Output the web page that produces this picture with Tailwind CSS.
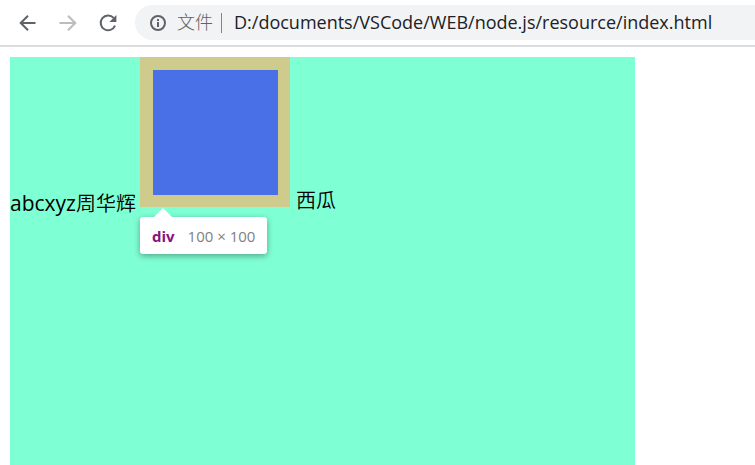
<!DOCTYPE html>
<html lang="zh-CN">
<head>
<meta charset="utf-8">
<meta name="viewport" content="width=device-width, initial-scale=1">
<title>index.html</title>
<script src="https://cdn.jsdelivr.net/npm/@tailwindcss/browser@4"></script>
</head>
<body class="flex h-screen flex-col overflow-hidden bg-white font-['Open_Sans','Noto_Sans_CJK_SC',sans-serif] text-black">
  <header class="flex shrink-0 items-center border-b-2 border-[#dadce0] pt-[5px] pb-[5px] pl-4">
    <nav class="flex items-center gap-4" aria-label="导航">
      <button type="button" aria-label="后退" class="size-6 text-[#5f6368]">
        <svg viewBox="0 0 24 24" class="size-6" fill="none" stroke="currentColor" stroke-width="2"><path d="M19.5 12H5M12 4.7 4.7 12l7.3 7.3"/></svg>
      </button>
      <button type="button" aria-label="前进" class="size-6 text-[#babcbe]">
        <svg viewBox="0 0 24 24" class="size-6" fill="none" stroke="currentColor" stroke-width="2"><path d="M3.5 12H19M12 4.7l7.3 7.3-7.3 7.3"/></svg>
      </button>
      <button type="button" aria-label="重新加载" class="size-6 text-[#5f6368]">
        <svg viewBox="0 0 24 24" class="size-6" fill="none" stroke="currentColor" stroke-width="2"><path d="M17.6 6.9A7.4 7.4 0 1 0 19 14.6"/><path d="M20.4 4v7h-7z" fill="currentColor" stroke="none"/></svg>
      </button>
    </nav>
    <div class="ml-[15px] flex h-[35px] min-w-0 flex-1 items-center rounded-l-full bg-[#f1f3f4] pl-[13px]">
      <svg viewBox="0 0 20 20" class="size-5 shrink-0 text-[#5f6368]" fill="none" stroke="currentColor" stroke-width="2" aria-hidden="true"><circle cx="10" cy="10" r="7"/><path d="M10 9v5M10 6v2"/></svg>
      <label for="address" class="ml-[9px] shrink-0 pb-[2px] text-lg font-light text-[#5f6368]">文件</label>
      <span class="ml-2 h-5 w-px shrink-0 bg-[#80868b]"></span>
      <input id="address" type="text" value="D:/documents/VSCode/WEB/node.js/resource/index.html" class="ml-3 min-w-0 flex-1 bg-transparent pb-[2px] text-lg text-[#202124] outline-none">
    </div>
  </header>
  <main class="mx-[10px] mt-[10px] flex w-full max-w-[625px] flex-1 items-start bg-[#7fffd4] text-xl leading-7">
    <span class="mt-[132px] w-[130px] shrink-0 whitespace-nowrap"><span class="text-[21px]">abcxyz</span><span class="font-[350]">周华辉</span></span>
    <div class="relative shrink-0">
      <div class="border-t-[13px] border-r-[12px] border-b-[12px] border-l-[13px] border-[#cecb8d] bg-[#4a70e8]"><div class="size-[125px]"></div></div>
      <div role="tooltip" class="absolute top-full left-0 mt-[10px] flex h-[37px] items-center gap-[13px] rounded-[3px] bg-white px-3 text-[15px] whitespace-nowrap shadow-[0_2px_6px_rgba(0,0,0,0.35)]">
        <svg viewBox="0 0 18 9" class="absolute -top-[9px] left-[14px] h-[9px] w-[18px]" fill="white" aria-hidden="true"><path d="M0 9 9 0l9 9z"/></svg>
        <span class="font-bold text-[#881280]">div</span>
        <span class="text-[#7f7f7f]">100 × 100</span>
      </div>
    </div>
    <span class="mt-[130px] ml-[6px] font-[350] whitespace-nowrap">西瓜</span>
  </main>
</body>
</html>
